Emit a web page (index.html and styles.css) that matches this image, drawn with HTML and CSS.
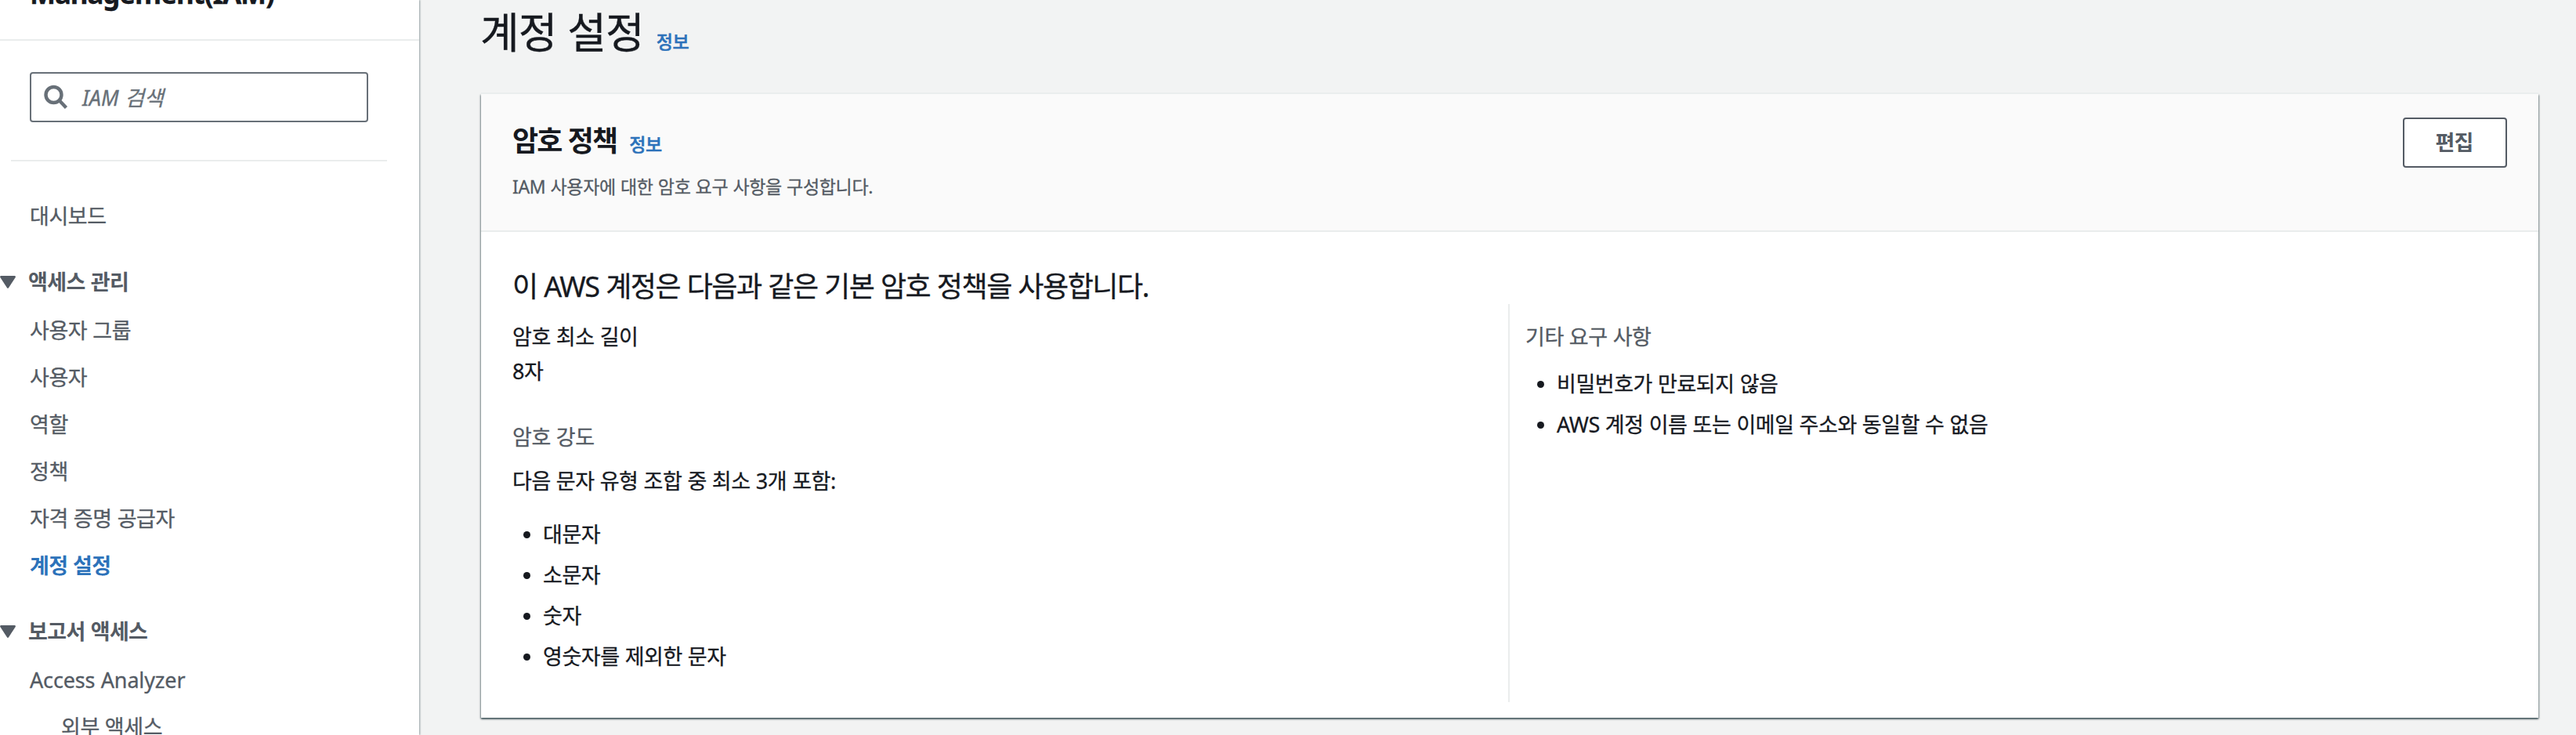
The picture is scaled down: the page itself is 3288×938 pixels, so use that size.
FILE: index.html
```html
<!DOCTYPE html>
<html lang="ko">
<head>
<meta charset="utf-8">
<title>계정 설정</title>
<link rel="stylesheet" href="styles.css">
</head>
<body>
<div class="app">
  <aside class="sidebar">
    <div class="sidebar-head"><span>Management(IAM)</span></div>
    <div class="search">
      <svg class="search-icon" viewBox="0 0 32 32"><circle cx="12.5" cy="13" r="10" fill="none" stroke="currentColor" stroke-width="4.4"/><path d="M19.5 20L28.5 29.5" stroke="currentColor" stroke-width="4.4"/></svg>
      <span class="placeholder">IAM 검색</span>
    </div>
    <hr class="rule">
    <nav class="nav">
      <a class="nav-item">대시보드</a>
      <h3 class="nav-section"><svg class="caret" viewBox="0 0 20 16"><path d="M1.2 0H18.8Q20.5 0.4 19.7 2L11.2 15Q10 16.8 8.8 15L0.3 2Q-0.5 0.4 1.2 0Z" fill="currentColor"/></svg>액세스 관리</h3>
      <a class="nav-item">사용자 그룹</a>
      <a class="nav-item">사용자</a>
      <a class="nav-item">역할</a>
      <a class="nav-item">정책</a>
      <a class="nav-item">자격 증명 공급자</a>
      <a class="nav-item active">계정 설정</a>
      <h3 class="nav-section"><svg class="caret" viewBox="0 0 20 16"><path d="M1.2 0H18.8Q20.5 0.4 19.7 2L11.2 15Q10 16.8 8.8 15L0.3 2Q-0.5 0.4 1.2 0Z" fill="currentColor"/></svg>보고서 액세스</h3>
      <a class="nav-item latin">Access Analyzer</a>
      <a class="nav-item sub">외부 액세스</a>
    </nav>
  </aside>
  <main class="main">
    <div class="page-head">
      <h1 class="page-title">계정 설정</h1><a class="info">정보</a>
    </div>
    <section class="card">
      <header class="card-head">
        <div>
          <div class="card-title-row"><h2 class="card-title">암호 정책</h2><a class="info">정보</a></div>
          <p class="card-desc">IAM 사용자에 대한 암호 요구 사항을 구성합니다.</p>
        </div>
        <button class="button">편집</button>
      </header>
      <div class="card-body">
        <h3 class="policy-title">이 AWS 계정은 다음과 같은 기본 암호 정책을 사용합니다.</h3>
        <div class="columns">
          <div class="column">
            <p class="text">암호 최소 길이</p>
            <p class="text length">8자</p>
            <p class="text label strength">암호 강도</p>
            <p class="text combo">다음 문자 유형 조합 중 최소 3개 포함:</p>
            <ul class="list">
              <li>대문자</li>
              <li>소문자</li>
              <li>숫자</li>
              <li>영숫자를 제외한 문자</li>
            </ul>
          </div>
          <div class="column other">
            <p class="text label">기타 요구 사항</p>
            <ul class="list">
              <li>비밀번호가 만료되지 않음</li>
              <li>AWS 계정 이름 또는 이메일 주소와 동일할 수 없음</li>
            </ul>
          </div>
        </div>
      </div>
    </section>
  </main>
</div>
</body>
</html>
```
FILE: styles.css
```css
* { box-sizing: border-box; }
body {
  margin: 0;
  background: #f2f3f3;
  color: #16191f;
  font-family: "Noto Sans", "Noto Sans CJK KR", sans-serif;
  font-size: 27px;
  letter-spacing: -0.45px;
  word-spacing: 0.5px;
  white-space: nowrap;
  -webkit-text-stroke: 0.3px currentColor;
}
h1, h2, h3, p, ul { margin: 0; padding: 0; font-weight: 400; }
.app { display: flex; height: 938px; overflow: hidden; }

.sidebar {
  flex: none;
  width: 535px;
  height: 938px;
  overflow: hidden;
  background: #fff;
  color: #545b64;
  box-shadow: 1px 0 2px rgba(0, 28, 36, 0.4);
}
.sidebar-head {
  display: flex;
  align-items: flex-end;
  height: 52px;
  padding: 0 0 33px 38px;
  border-bottom: 2px solid #eaeded;
  color: #16191f;
  font-size: 35px;
  font-weight: 700;
  line-height: 50px;
  letter-spacing: -1.1px;
}
.search {
  display: flex;
  align-items: center;
  width: 432px;
  height: 64px;
  margin: 40px 0 0 38px;
  padding-left: 16px;
  border: 2px solid #687078;
  border-radius: 4px;
  color: #687078;
}
.search-icon { width: 32px; height: 32px; }
.placeholder { margin-left: 17px; padding-top: 1px; font-style: italic; line-height: 60px; letter-spacing: 0; }
.rule { width: 480px; height: 2px; margin: 48px 0 0 14px; border: 0; background: #eaeded; }
.nav { display: flex; flex-direction: column; padding-top: 40px; }
.nav-item { flex: none; height: 60px; padding-left: 38px; line-height: 60px; }
.nav-item.sub { padding-left: 78px; }
.nav-item.latin { letter-spacing: -0.15px; }
.nav-item.active { color: #2c72ba; font-weight: 700; letter-spacing: -0.7px; -webkit-text-stroke: 0; }
.nav-section {
  display: flex;
  align-items: center;
  height: 60px;
  margin: 24px 0 2px;
  font-size: 27px;
  font-weight: 700;
  line-height: 60px;
  letter-spacing: -0.6px;
  -webkit-text-stroke: 0;
}
.caret { width: 20px; height: 16px; margin-right: 16px; }

.main { flex: 1; padding-left: 79px; }
.page-head { display: flex; align-items: baseline; height: 120px; }
.page-title { padding-top: 1px; font-size: 54px; line-height: 80px; letter-spacing: -0.9px; margin-left: -1px; }
.info { color: #2c72ba; font-size: 23px; font-weight: 500; letter-spacing: -0.5px; margin-left: 16px; -webkit-text-stroke: 0.5px currentColor; }
.card {
  width: 2626px;
  height: 796px;
  background: #fff;
  box-shadow: 0 -2px 0 #eaeded, 0 2px 2px rgba(0, 28, 36, 0.5), 1px 1px 2px rgba(0, 28, 36, 0.35), -1px 1px 2px rgba(0, 28, 36, 0.35);
}
.card-head {
  display: flex;
  justify-content: space-between;
  height: 176px;
  padding: 30px 40px 0;
  border-bottom: 2px solid #eaeded;
  background: #fafafa;
}
.card-title-row { display: flex; align-items: baseline; height: 60px; }
.card-title { font-size: 36px; font-weight: 700; line-height: 60px; letter-spacing: -1.8px; -webkit-text-stroke: 0; }
.card-desc { margin-top: 8px; color: #545b64; font-size: 23px; line-height: 40px; letter-spacing: -0.33px; }
.button {
  width: 133px;
  height: 64px;
  padding: 0 2px 0 0;
  border: 2px solid #545b64;
  border-radius: 4px;
  background: #fff;
  color: #545b64;
  font: 700 27px/58px "Noto Sans", "Noto Sans CJK KR", sans-serif;
  letter-spacing: -0.8px;
  -webkit-text-stroke: 0;
}
.card-body { padding: 45px 40px 0; }
.policy-title { height: 47px; font-size: 36px; line-height: 50px; letter-spacing: -1.42px; }
.columns { display: flex; }
.column { width: 1271px; height: 508px; padding-top: 20px; }
.column.other { padding-left: 20px; border-left: 2px solid #eaeded; }
.text { height: 44px; line-height: 44px; }
.label { color: #545b64; }
.strength { margin-top: 40px; }
.combo { margin-top: 12px; }
.list { padding-left: 39px; list-style: none; }
.combo + .list { margin-top: 20px; }
.label + .list { margin-top: 12px; padding-left: 40px; }
.list li { display: flex; align-items: center; height: 52px; line-height: 52px; }
.list li::before {
  content: "";
  width: 9px;
  height: 9px;
  margin: 0 16px 0 -25px;
  border-radius: 50%;
  background: #16191f;
}
```
